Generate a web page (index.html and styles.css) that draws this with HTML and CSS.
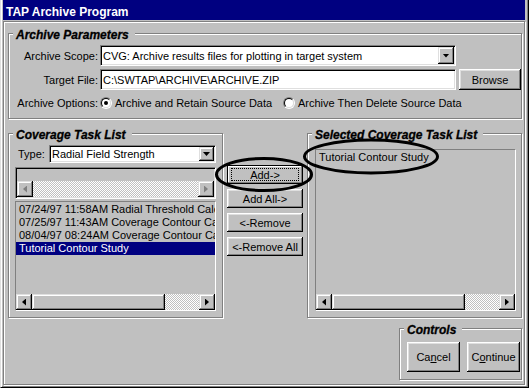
FILE: index.html
```html
<!DOCTYPE html>
<html lang="en">
<head>
    <meta charset="UTF-8">
    <title>TAP Archive Program</title>
    <link rel="stylesheet" href="styles.css">
</head>
<body>
    <div class="window">
        <div class="titlebar">TAP Archive Program</div>

        <div class="client">
            <div class="group params">
                <div class="group-title">Archive Parameters</div>

                <div class="field-row">
                    <span class="field-label">Archive Scope:</span>
                    <div class="combo scope-combo">
                        <span class="combo-text">CVG: Archive results files for plotting in target system</span>
                        <span class="combo-btn"><span class="arrow-down"></span></span>
                    </div>
                </div>

                <div class="field-row target-row">
                    <span class="field-label">Target File:</span>
                    <div class="textbox">C:\SWTAP\ARCHIVE\ARCHIVE.ZIP</div>
                    <button class="btn browse-btn">Browse</button>
                </div>

                <div class="field-row options-row">
                    <span class="field-label">Archive Options:</span>
                    <label class="option option-first">
                        <span class="radio checked"><span class="radio-inner"></span></span>
                        Archive and Retain Source Data
                    </label>
                    <label class="option">
                        <span class="radio"><span class="radio-inner"></span></span>
                        Archive Then Delete Source Data
                    </label>
                </div>
            </div>

            <div class="lists-row">
                <div class="group coverage">
                    <div class="group-title">Coverage Task List</div>

                    <div class="type-row">
                        <span class="type-label">Type:</span>
                        <div class="combo type-combo">
                            <span class="combo-text">Radial Field Strength</span>
                            <span class="combo-btn"><span class="arrow-down"></span></span>
                        </div>
                    </div>

                    <div class="header-box">
                        <div class="header-space"></div>
                        <div class="scrollbar">
                            <span class="sb-btn disabled"><span class="arrow-left"></span></span>
                            <span class="sb-track"></span>
                            <span class="sb-btn disabled"><span class="arrow-right"></span></span>
                        </div>
                    </div>

                    <div class="listbox task-list">
                        <div class="list-items">
                            <div class="list-item">07/24/97 11:58AM Radial Threshold Calc</div>
                            <div class="list-item">07/25/97 11:43AM Coverage Contour Ca</div>
                            <div class="list-item">08/04/97 08:24AM Coverage Contour Ca</div>
                            <div class="list-item selected">Tutorial Contour Study</div>
                        </div>
                        <div class="scrollbar">
                            <span class="sb-btn"><span class="arrow-left"></span></span>
                            <span class="sb-thumb"></span>
                            <span class="sb-track"></span>
                            <span class="sb-btn"><span class="arrow-right"></span></span>
                        </div>
                    </div>
                </div>

                <div class="move-buttons">
                    <button class="btn btn-default"><span class="focus-rect">Add-&gt;</span></button>
                    <button class="btn move-btn">Add All-&gt;</button>
                    <button class="btn move-btn">&lt;-Remove</button>
                    <button class="btn move-btn">&lt;-Remove All</button>
                </div>

                <div class="group selected-group">
                    <div class="group-title">Selected Coverage Task List</div>

                    <div class="listbox chosen-list">
                        <div class="list-items">
                            <div class="list-item">Tutorial Contour Study</div>
                        </div>
                        <div class="scrollbar">
                            <span class="sb-btn"><span class="arrow-left"></span></span>
                            <span class="sb-thumb"></span>
                            <span class="sb-track"></span>
                            <span class="sb-btn"><span class="arrow-right"></span></span>
                        </div>
                    </div>
                </div>
            </div>

            <div class="group controls">
                <div class="group-title">Controls</div>
                <button class="btn ctl-btn">Ca<u>n</u>cel</button>
                <button class="btn ctl-btn">C<u>o</u>ntinue</button>
            </div>
        </div>

        <!-- hand-drawn marks on the screenshot -->
        <svg class="annotations" width="529" height="388" viewBox="0 0 529 388">
            <ellipse cx="264" cy="174.5" rx="47.5" ry="16" fill="none" stroke="#000" stroke-width="3"/>
            <ellipse cx="371" cy="156.5" rx="66.5" ry="16.5" fill="none" stroke="#000" stroke-width="3"/>
        </svg>
    </div>
</body>
</html>
```

FILE: styles.css
```css
* {
    margin: 0;
    padding: 0;
    box-sizing: border-box;
}

body {
    background: #c0c0c0;
    font-family: "Liberation Sans", Arial, sans-serif;
    font-size: 11px;
    color: #000;
}

.window {
    position: relative;
    width: 529px;
    height: 388px;
    background: #c0c0c0;
    border: 1px solid;
    border-top: 0;
    border-color: #dfdfdf #000 #000 #dfdfdf;
    box-shadow: inset 1px 0 #fff, inset -1px -1px #808080;
    padding: 0 3px 2px 2px;
    display: flex;
    flex-direction: column;
}

.titlebar {
    height: 20px;
    padding: 4px 0 0 3px;
    line-height: 16px;
    background: #000080;
    color: #fff;
    font-weight: bold;
    font-size: 12px;
    flex: none;
}

.client {
    flex: 1;
    margin-top: 1px;
    border: 1px solid #808080;
    box-shadow: inset 1px 1px #fff, 1px 1px #fff;
    display: flex;
    flex-direction: column;
}

/* group boxes */
.group {
    position: relative;
    border: 1px solid #808080;
    box-shadow: inset 1px 1px #fff, 1px 1px #fff;
}

.group-title {
    position: absolute;
    top: -6px;
    left: 4px;
    padding: 0 6px 0 3px;
    background: #c0c0c0;
    font: italic bold 12px/14px "Liberation Sans", Arial, sans-serif;
    -webkit-text-stroke: 0.3px #000;
    white-space: nowrap;
}

.params {
    margin: 11px 2px 0 4px;
    padding: 11px 0 7px 0;
}

.field-row {
    display: flex;
    align-items: center;
    height: 21px;
}

.target-row {
    margin-top: 3px;
}

.options-row {
    height: 16px;
    margin-top: 5px;
}

.field-label {
    flex: none;
    width: 89px;
    margin-right: 2px;
    text-align: right;
    white-space: nowrap;
}

/* sunken inputs */
.combo,
.textbox {
    background: #fff;
    border: 1px solid;
    border-color: #808080 #fff #fff #808080;
    box-shadow: inset 1px 1px #000, inset -1px -1px #dfdfdf;
    white-space: nowrap;
    overflow: hidden;
}

.combo {
    display: flex;
    align-items: stretch;
    padding: 1px;
}

.combo-text {
    flex: 1;
    padding-left: 1px;
    display: flex;
    align-items: center;
    overflow: hidden;
}

.combo-btn {
    flex: none;
    width: 16px;
    background: #c0c0c0;
    box-shadow: inset -1px -1px #000, inset 1px 1px #dfdfdf, inset -2px -2px #808080, inset 2px 2px #fff;
    display: flex;
    align-items: center;
    justify-content: center;
}

.arrow-down {
    width: 7px;
    height: 4px;
    background: #000;
    clip-path: polygon(0 0, 100% 0, 50% 100%);
}

.scope-combo {
    width: 356px;
    height: 21px;
}

.textbox {
    width: 356px;
    height: 21px;
    padding: 0 2px;
    display: flex;
    align-items: center;
}

/* buttons */
.btn {
    font: inherit;
    color: #000;
    background: #c0c0c0;
    border: 0;
    box-shadow: inset -1px -1px #000, inset 1px 1px #fff, inset -2px -2px #808080, inset 2px 2px #dfdfdf;
    display: flex;
    align-items: center;
    justify-content: center;
    white-space: nowrap;
}

.browse-btn {
    width: 62px;
    height: 21px;
    margin-left: 3px;
}

/* radio buttons */
.option {
    display: flex;
    align-items: center;
    white-space: nowrap;
}

.option-first {
    width: 183px;
}

.radio {
    flex: none;
    width: 12px;
    height: 12px;
    margin-right: 3px;
    border-radius: 50%;
    border: 1px solid;
    border-color: #808080 #fff #fff #808080;
    display: flex;
}

.radio-inner {
    flex: 1;
    border-radius: 50%;
    border: 1px solid;
    border-color: #000 #dfdfdf #dfdfdf #000;
    background: #fff;
    display: flex;
    align-items: center;
    justify-content: center;
}

.radio.checked .radio-inner::after {
    content: "";
    width: 4px;
    height: 4px;
    border-radius: 50%;
    background: #000;
}

/* lists row */
.lists-row {
    display: flex;
    align-items: flex-start;
    margin-top: 14px;
}

.coverage {
    width: 215px;
    height: 185px;
    margin-left: 4px;
    padding: 11px 0 0 6px;
}

.type-row {
    display: flex;
    align-items: center;
    margin-left: 3px;
}

.type-label {
    width: 31px;
}

.type-combo {
    width: 167px;
    height: 18px;
}

.type-combo .combo-btn {
    width: 15px;
}

.header-box {
    width: 201px;
    height: 32px;
    margin-top: 4px;
    padding: 1px;
    border: 1px solid;
    border-color: #808080 #fff #fff #808080;
    box-shadow: inset 1px 1px #000, inset -1px -1px #dfdfdf;
    display: flex;
    flex-direction: column;
}

.header-space {
    flex: 1;
}

.listbox {
    width: 201px;
    border: 1px solid;
    border-color: #808080 #fff #fff #808080;
    display: flex;
    flex-direction: column;
}

.task-list {
    height: 110px;
    margin-top: 2px;
}

.list-items {
    flex: 1;
    padding-top: 1px;
    overflow: hidden;
}

.list-item {
    height: 13px;
    line-height: 13px;
    padding-left: 3px;
    white-space: nowrap;
    overflow: hidden;
}

.list-item.selected {
    background: #000080;
    color: #fff;
}

/* scrollbars */
.scrollbar {
    flex: none;
    height: 16px;
    display: flex;
}

.sb-btn,
.sb-thumb {
    background: #c0c0c0;
    box-shadow: inset -1px -1px #000, inset 1px 1px #dfdfdf, inset -2px -2px #808080, inset 2px 2px #fff;
}

.sb-btn {
    flex: none;
    width: 16px;
    display: flex;
    align-items: center;
    justify-content: center;
}

.sb-thumb {
    flex: 0 0 133px;
}

.sb-track {
    flex: 1;
    background-image: repeating-conic-gradient(#c0c0c0 0% 25%, #fff 0% 50%);
    background-size: 2px 2px;
}

.arrow-left,
.arrow-right {
    width: 4px;
    height: 7px;
    background: #000;
}

.arrow-left {
    clip-path: polygon(100% 0, 100% 100%, 0 50%);
}

.arrow-right {
    clip-path: polygon(0 0, 100% 50%, 0 100%);
}

.sb-btn.disabled .arrow-left,
.sb-btn.disabled .arrow-right {
    background: #808080;
    filter: drop-shadow(1px 1px 0 #fff);
}

/* add / remove buttons */
.move-buttons {
    flex: none;
    width: 76px;
    margin: 32px 4px 0 4px;
    display: flex;
    flex-direction: column;
    gap: 5px;
}

.move-btn {
    height: 19px;
}

.btn-default {
    height: 19px;
    border: 1px solid #000;
    padding: 2px 3px;
    box-shadow: inset -1px -1px #808080, inset 1px 1px #fff;
    align-items: stretch;
}

.focus-rect {
    flex: 1;
    border: 1px dotted #000;
    display: flex;
    align-items: center;
    justify-content: center;
}

.selected-group {
    width: 215px;
    height: 185px;
    padding: 15px 0 0 7px;
}

.chosen-list {
    height: 162px;
}

/* controls */
.controls {
    width: 123px;
    height: 52px;
    margin: 10px 2px 0 auto;
    padding: 13px 0 0 7px;
    display: flex;
    gap: 7px;
}

.ctl-btn {
    width: 53px;
    height: 30px;
}

.ctl-btn u {
    text-decoration-thickness: 1px;
}

.annotations {
    position: absolute;
    top: 0;
    left: -1px;
    pointer-events: none;
}
```
